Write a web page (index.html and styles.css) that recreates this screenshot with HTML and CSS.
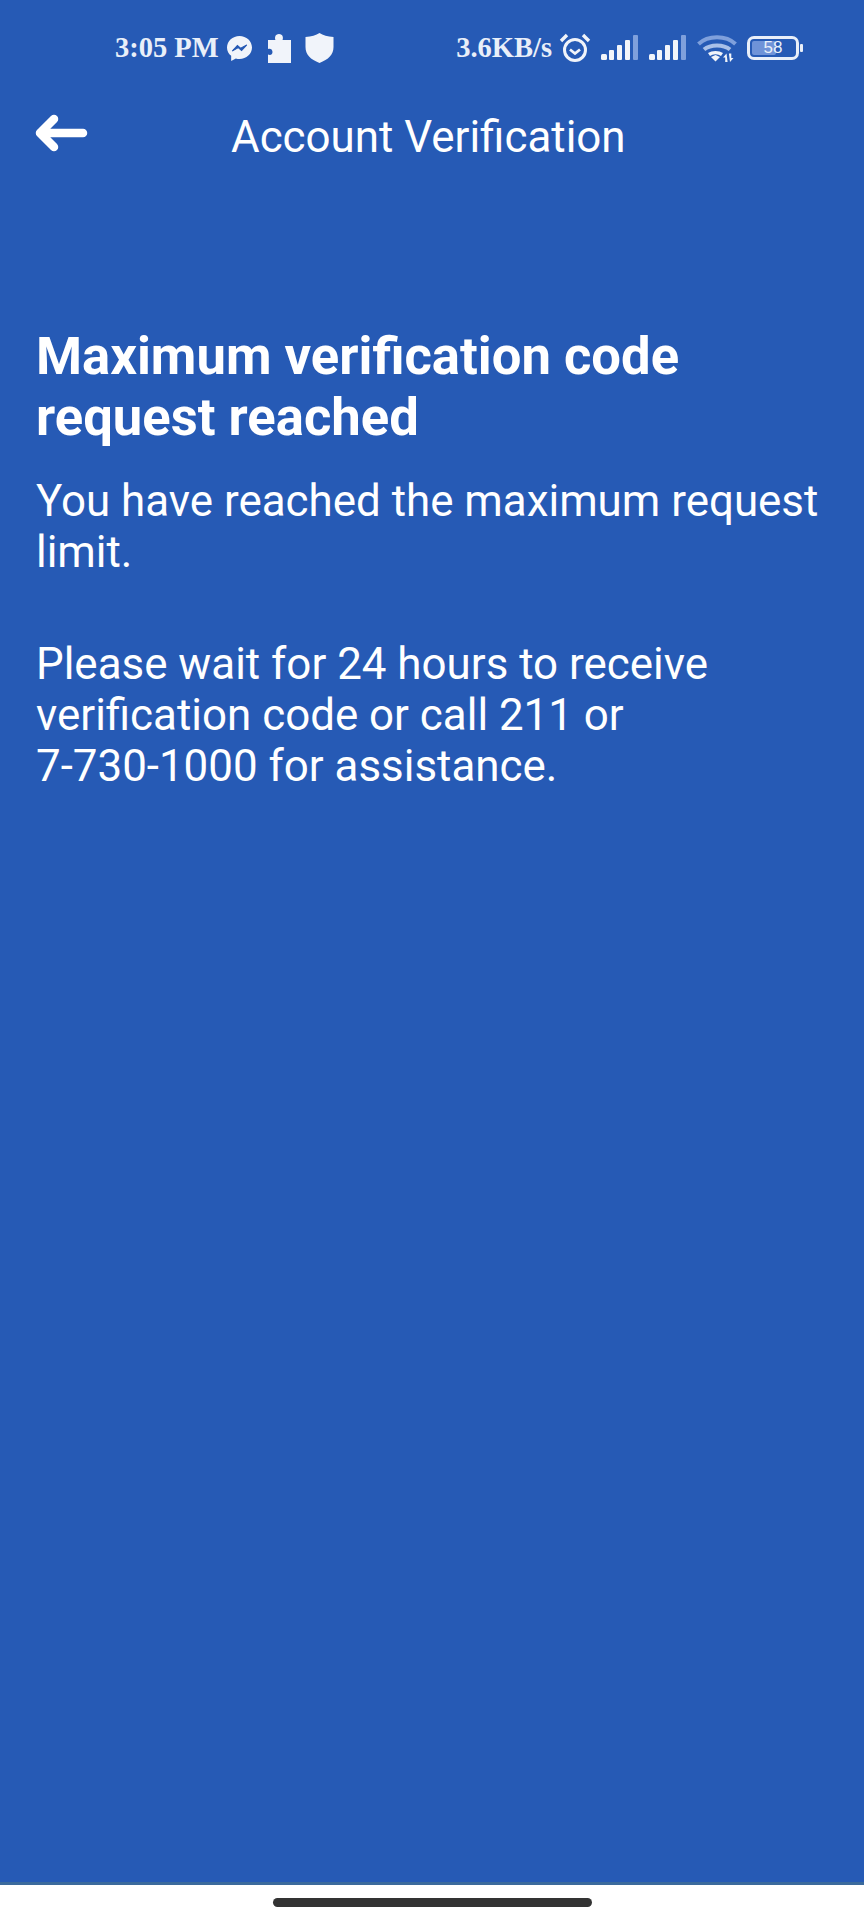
FILE: index.html
```html
<!DOCTYPE html>
<html lang="en">
<head>
  <meta charset="UTF-8">
  <meta name="viewport" content="width=device-width, initial-scale=1.0">
  <title>Account Verification</title>
  <link rel="stylesheet" href="styles.css">
</head>
<body>
  <div class="screen">
    <!-- Status bar -->
    <div class="status-bar">
      <div class="status-left">
        <span class="status-text">3:05 PM</span>
        <svg class="icon-messenger" width="25" height="25" viewBox="1 1 24 24">
          <path d="M13 1C6.400 1 1 5.900 1 12c0 3.300 1.500 6.100 4 8v5l4.500-2.500c1.100.3 2.300.5 3.500.5 6.600 0 12-4.900 12-11S19.600 1 13 1z" fill="#f1f4fa"/>
          <path d="M6 15.500l5-5.500 3.200 2.800L20 9.500l-5 5.500-3.200-2.800z" fill="#2559b5" stroke="#2559b5"/>
        </svg>
        <svg class="icon-puzzle" width="25" height="30" viewBox="0 0 25 30">
          <path d="M1 7h7.500C7.500 5 8 1 12 1s4.500 4 3.500 6H24v23H1v-8.500c2 1 4.500.5 4.500-2.500S3 15 1 16z" fill="#f1f4fa"/>
        </svg>
        <svg class="icon-shield" width="29" height="30" viewBox="0 0 29 30">
          <path d="M14.500 0c3.500 2.300 8 3.500 14 4v10c0 7.500-5 12.500-14 16C5.500 26.500.5 21.500.5 14V4c6-.5 10.500-1.700 14-4z" fill="#f1f4fa"/>
        </svg>
      </div>
      <div class="status-right">
        <span class="status-text">3.6KB/s</span>
        <svg class="icon-alarm" width="32" height="30" viewBox="0 0 32 30" fill="none" stroke="#f1f4fa">
          <circle cx="16" cy="17" r="10.500" stroke-width="3"/>
          <path d="M11 16.500l5 4 5-4" stroke-width="2.800"/>
          <path d="M2 8l6-6M30 8l-6-6" stroke-width="3.400"/>
        </svg>
        <svg class="icon-signal" width="38" height="26" viewBox="0 0 38 26">
          <rect x="0" y="19" width="6" height="6" rx="1.500" fill="#f1f4fa"/>
          <rect x="8" y="15" width="5" height="10" rx="1" fill="#f1f4fa"/>
          <rect x="16" y="10" width="5" height="15" rx="1" fill="#f1f4fa"/>
          <rect x="24" y="5" width="5" height="20" rx="1" fill="#f1f4fa"/>
          <rect x="32" y="0" width="5" height="25" rx="1" fill="#7fa0dc"/>
        </svg>
        <svg class="icon-signal" width="38" height="26" viewBox="0 0 38 26">
          <rect x="0" y="19" width="6" height="6" rx="1.500" fill="#f1f4fa"/>
          <rect x="8" y="15" width="5" height="10" rx="1" fill="#f1f4fa"/>
          <rect x="16" y="10" width="5" height="15" rx="1" fill="#f1f4fa"/>
          <rect x="24" y="5" width="5" height="20" rx="1" fill="#f1f4fa"/>
          <rect x="32" y="0" width="5" height="25" rx="1" fill="#7fa0dc"/>
        </svg>
        <svg class="icon-wifi" width="40" height="28" viewBox="0 0 40 28" fill="none">
          <path d="M1.500 10C11 1 29 1 38.500 10" stroke="#7fa0dc" stroke-width="4"/>
          <path d="M7 15.500c6.500-5.500 19.500-5.500 26 0" stroke="#a9c0e8" stroke-width="4"/>
          <path d="M12 20.500c3.500-2.500 9.500-2.500 13 0" stroke="#f1f4fa" stroke-width="3.400"/>
          <path d="M14 23l4.500-2 4.500 2-4.500 4.500z" fill="#f1f4fa"/>
          <path d="M29.500 19.500L26 23.500h2.200V28h2.400zM33 28l3.500-4h-2.200v-4.500h-2.400z" fill="#f1f4fa"/>
        </svg>
        <div class="battery">
          <div class="battery-body">
            <div class="battery-fill"></div>
            <span class="battery-level">58</span>
          </div>
          <div class="battery-cap"></div>
        </div>
      </div>
    </div>

    <!-- Header -->
    <div class="header">
      <svg class="back-icon" width="54" height="40" viewBox="0 0 54 40" fill="none" stroke="#fff" stroke-width="8.500" stroke-linecap="round" stroke-linejoin="round">
        <path d="M49 20H7M20 6L6 20l14 14"/>
      </svg>
      <h1 class="header-title">Account Verification</h1>
    </div>

    <!-- Message -->
    <div class="content">
      <h2 class="content-title">Maximum verification code request reached</h2>
      <p class="content-text">You have reached the maximum request limit.</p>
      <p class="content-text">Please wait for 24 hours to receive verification code or call 211 or <span class="phone">7-730-1000</span> for assistance.</p>
    </div>
  </div>

  <div class="nav-bar">
    <div class="home-indicator"></div>
  </div>
</body>
</html>
```

FILE: styles.css
```css
html, body {
  margin: 0;
  padding: 0;
}
body {
  width: 864px;
  height: 1920px;
  display: flex;
  flex-direction: column;
  font-family: Roboto, "Noto Sans", sans-serif;
  background-color: #fff;
  color: #fff;
  overflow: hidden;
}
.screen {
  flex: 1;
  background-color: #265ab5;
  border-bottom: 3px solid #3b6a9c;
}

.status-bar {
  height: 96px;
  padding: 0 61px 0 115px;
  display: flex;
  justify-content: space-between;
  align-items: center;
}
.status-left,
.status-right {
  display: flex;
  align-items: center;
}
.status-text {
  font-family: "Liberation Serif", serif;
  font-weight: bold;
  font-size: 28.5px;
  color: #e9eff9;
}
.icon-messenger {
  margin-left: 8px;
}
.icon-puzzle {
  margin-left: 15px;
}
.icon-shield {
  margin-left: 13px;
}
.icon-alarm {
  margin-left: 7px;
}
.icon-signal {
  margin-left: 10px;
}
.icon-signal:first-of-type {
  margin-left: 11px;
}
.icon-wifi {
  margin-left: 10px;
}
.battery {
  display: flex;
  align-items: center;
  margin-left: 10px;
}
.battery-body {
  position: relative;
  width: 52px;
  height: 24px;
  border: 3px solid #e9eff9;
  border-radius: 7px;
  padding: 2px;
  box-sizing: border-box;
}
.battery-fill {
  width: 58%;
  height: 100%;
  background-color: #6f93d8;
  border-radius: 2px;
}
.battery-level {
  position: absolute;
  top: 0;
  left: 0;
  right: 0;
  bottom: 0;
  text-align: center;
  line-height: 18px;
  font-family: "Liberation Sans", sans-serif;
  font-size: 17px;
  color: #e9eff9;
}
.battery-cap {
  width: 3px;
  height: 8px;
  margin-left: 1px;
  background-color: #e9eff9;
  border-radius: 1px;
}

.header {
  height: 82px;
  display: flex;
  align-items: center;
  padding-left: 34px;
}
.back-icon {
  flex: none;
  margin-bottom: 8px;
}
.header-title {
  margin: 0 0 0 143px;
  font-size: 43.9px;
  font-weight: 400;
  white-space: nowrap;
}

.content {
  padding: 148px 32px 0 36px;
}
.content-title {
  margin: 0 0 28px;
  font-size: 52.6px;
  line-height: 61px;
  font-weight: 700;
}
.content-text {
  margin: 0 0 61px;
  font-size: 43.9px;
  line-height: 51px;
}
.phone {
  white-space: nowrap;
}

.nav-bar {
  flex: none;
  height: 35px;
  display: flex;
  justify-content: center;
  align-items: center;
}
.home-indicator {
  width: 319px;
  height: 9px;
  background-color: #333;
  border-radius: 5px;
}
```
